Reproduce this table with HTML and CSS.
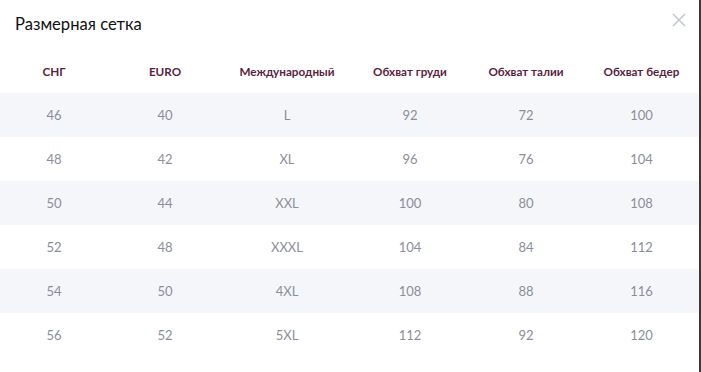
FILE: index.html
```html
<!DOCTYPE html>
<html lang="ru">
<head>
<meta charset="utf-8">
<link rel="stylesheet" href="styles.css">
</head>
<body>
<div class="modal">
  <div class="modal-head">
    <h2 class="title">Размерная сетка</h2>
    <button class="close" aria-label="Закрыть">
      <svg width="14" height="14" viewBox="0 0 14 14"><path d="M1 1L13 13M13 1L1 13" stroke="#c3c8d1" stroke-width="1.6" fill="none"/></svg>
    </button>
  </div>
  <table class="sizes">
    <colgroup>
      <col class="c1"><col class="c2"><col class="c3"><col class="c4"><col class="c5"><col class="c6">
    </colgroup>
    <thead>
      <tr><th>СНГ</th><th>EURO</th><th>Международный</th><th>Обхват груди</th><th>Обхват талии</th><th>Обхват бедер</th></tr>
    </thead>
    <tbody>
      <tr><td>46</td><td>40</td><td>L</td><td>92</td><td>72</td><td>100</td></tr>
      <tr><td>48</td><td>42</td><td>XL</td><td>96</td><td>76</td><td>104</td></tr>
      <tr><td>50</td><td>44</td><td>XXL</td><td>100</td><td>80</td><td>108</td></tr>
      <tr><td>52</td><td>48</td><td>XXXL</td><td>104</td><td>84</td><td>112</td></tr>
      <tr><td>54</td><td>50</td><td>4XL</td><td>108</td><td>88</td><td>116</td></tr>
      <tr><td>56</td><td>52</td><td>5XL</td><td>112</td><td>92</td><td>120</td></tr>
    </tbody>
  </table>
</div>
</body>
</html>
```

FILE: styles.css
```css
html, body {
  margin: 0;
  padding: 0;
  height: 100%;
  background: #3a3a3a;
}
body {
  font-family: Lato, "Open Sans", sans-serif;
}
.modal {
  width: 699px;
  height: 372px;
  background: #ffffff;
  box-sizing: border-box;
}
.modal-head {
  display: flex;
  justify-content: space-between;
  align-items: flex-start;
  padding: 13px 13px 0 15px;
  height: 49px;
  box-sizing: border-box;
}
.title {
  margin: 0;
  font-size: 16.6px;
  font-weight: 400;
  color: #111;
  line-height: 22px;
}
.close {
  border: 0;
  background: none;
  padding: 0;
  width: 14px;
  height: 14px;
  display: flex;
}
.sizes {
  width: 699px;
  border-collapse: collapse;
  table-layout: fixed;
}
.c1 { width: 108px; }
.c2 { width: 114px; }
.c3 { width: 130px; }
.c4 { width: 116px; }
.c5 { width: 116px; }
.c6 { width: 115px; }
.sizes th {
  height: 44px;
  font-size: 11.7px;
  font-weight: 700;
  color: #5a1e42;
  text-align: center;
  padding: 0;
}
.sizes td {
  height: 44px;
  font-size: 13px;
  color: #8b8e99;
  text-align: center;
  padding: 0;
}
.sizes tbody tr:nth-child(odd) td {
  background: #f5f6fa;
}
```
